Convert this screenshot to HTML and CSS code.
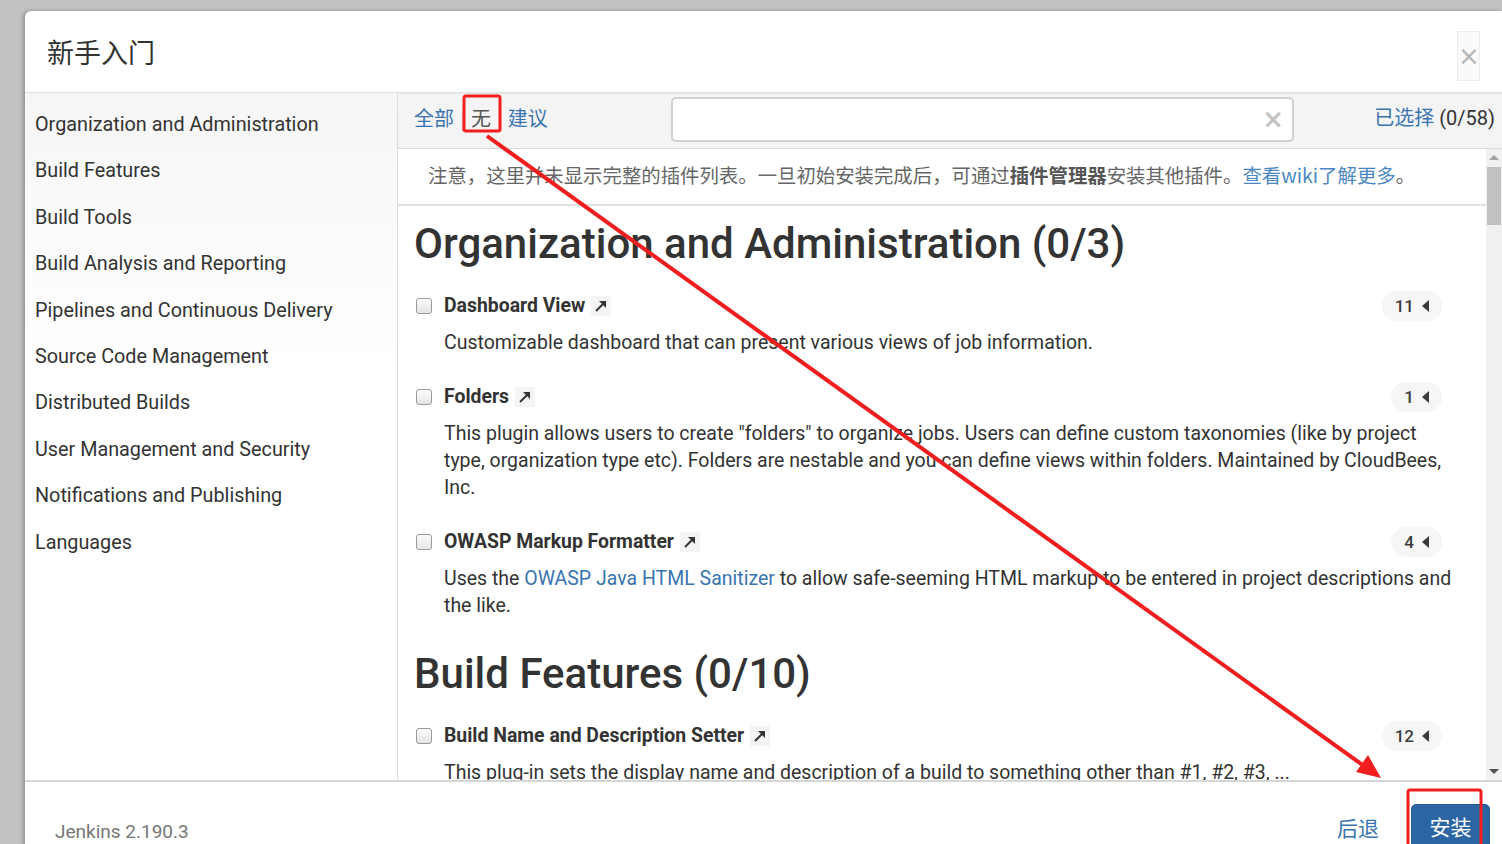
FILE: index.html
```html
<!DOCTYPE html>
<html lang="zh">
<head>
<meta charset="utf-8">
<title>新手入门</title>
<link rel="stylesheet" href="styles.css">
</head>
<body>
<div class="modal">
  <div class="modal-header">
    <h1 class="modal-title">新手入门</h1>
    <button class="close" type="button">×</button>
  </div>
  <div class="modal-body">
    <ul class="categories">
      <li>Organization and Administration</li>
      <li>Build Features</li>
      <li>Build Tools</li>
      <li>Build Analysis and Reporting</li>
      <li>Pipelines and Continuous Delivery</li>
      <li>Source Code Management</li>
      <li>Distributed Builds</li>
      <li>User Management and Security</li>
      <li>Notifications and Publishing</li>
      <li>Languages</li>
    </ul>
    <div class="plugins">
      <div class="toolbar">
        <div class="filters">
          <a href="#">全部</a><span class="sep">|</span><a href="#" class="active">无</a><span class="sep">|</span><a href="#">建议</a>
        </div>
        <div class="search">
          <input type="text" class="search-input">
          <span class="clear">×</span>
        </div>
        <div class="selected"><a href="#">已选择</a> (0/58)</div>
      </div>
      <div class="scroll-area">
        <div class="scroll-content">
          <p class="notice">注意，这里并未显示完整的插件列表。一旦初始安装完成后，可通过<b>插件管理器</b>安装其他插件。<a href="#">查看wiki了解更多</a>。</p>
          <div class="list">
            <h2 class="category">Organization and Administration (0/3)</h2>
            <div class="plugin">
              <div class="plugin-head">
                <span class="check"></span>
                <span class="name">Dashboard View</span>
                <span class="ext"><svg viewBox="0 0 14 14" width="14" height="14"><path d="M2 12 L11 3" stroke="#333" stroke-width="2"/><path d="M5 2 H12 V9 Z" fill="#333"/></svg></span>
                <span class="badge">11<i class="caret"></i></span>
              </div>
              <p class="desc">Customizable dashboard that can present various views of job information.</p>
            </div>
            <div class="plugin">
              <div class="plugin-head">
                <span class="check"></span>
                <span class="name">Folders</span>
                <span class="ext"><svg viewBox="0 0 14 14" width="14" height="14"><path d="M2 12 L11 3" stroke="#333" stroke-width="2"/><path d="M5 2 H12 V9 Z" fill="#333"/></svg></span>
                <span class="badge">1<i class="caret"></i></span>
              </div>
              <p class="desc">This plugin allows users to create "folders" to organize jobs. Users can define custom taxonomies (like by project type, organization type etc). Folders are nestable and you can define views within folders. Maintained by CloudBees, Inc.</p>
            </div>
            <div class="plugin">
              <div class="plugin-head">
                <span class="check"></span>
                <span class="name">OWASP Markup Formatter</span>
                <span class="ext"><svg viewBox="0 0 14 14" width="14" height="14"><path d="M2 12 L11 3" stroke="#333" stroke-width="2"/><path d="M5 2 H12 V9 Z" fill="#333"/></svg></span>
                <span class="badge">4<i class="caret"></i></span>
              </div>
              <p class="desc">Uses the <a href="#">OWASP Java HTML Sanitizer</a> to allow safe-seeming HTML markup to be entered in project descriptions and the like.</p>
            </div>
            <h2 class="category">Build Features (0/10)</h2>
            <div class="plugin">
              <div class="plugin-head">
                <span class="check"></span>
                <span class="name">Build Name and Description Setter</span>
                <span class="ext"><svg viewBox="0 0 14 14" width="14" height="14"><path d="M2 12 L11 3" stroke="#333" stroke-width="2"/><path d="M5 2 H12 V9 Z" fill="#333"/></svg></span>
                <span class="badge">12<i class="caret"></i></span>
              </div>
              <p class="desc">This plug-in sets the display name and description of a build to something other than #1, #2, #3, ...</p>
            </div>
          </div>
        </div>
        <div class="scrollbar">
          <span class="arrow up"></span>
          <div class="track"><div class="thumb"></div></div>
          <span class="arrow down"></span>
        </div>
      </div>
    </div>
  </div>
  <div class="modal-footer">
    <span class="version">Jenkins 2.190.3</span>
    <div class="actions">
      <a href="#" class="back">后退</a>
      <button type="button" class="install">安装</button>
    </div>
  </div>
</div>
<svg class="annotation" width="1502" height="844" viewBox="0 0 1502 844">
  <rect x="464" y="96" width="36" height="35" rx="2" fill="none" stroke="#f01e1e" stroke-width="3"/>
  <line x1="487" y1="136" x2="1364" y2="766" stroke="#f01e1e" stroke-width="4"/>
  <polygon points="1381,778 1356,772 1368,755" fill="#f01e1e"/>
  <rect x="1408" y="790" width="73" height="60" rx="2" fill="none" stroke="#f01e1e" stroke-width="3"/>
</svg>
</body>
</html>
```

FILE: styles.css
```css
* { box-sizing: border-box; }

html, body {
  margin: 0;
  height: 844px;
  overflow: hidden;
}

body {
  background: #c2c2c2;
  padding: 11px 0 0 25px;
  font-family: Roboto, "Noto Sans CJK SC", sans-serif;
  color: #333;
  position: relative;
}

a { color: #3a74b0; text-decoration: none; }

.modal {
  width: 1477px;
  height: 900px;
  background: #fff;
  border-radius: 6px 0 0 0;
  box-shadow: -2px 0 4px rgba(0, 0, 0, 0.25);
  display: flex;
  flex-direction: column;
}

.modal-header {
  height: 82px;
  border-bottom: 1px solid #e2e2e2;
  display: flex;
  align-items: center;
  justify-content: space-between;
  padding: 0 22px 0 22px;
}

.modal-title {
  margin: 0;
  font-size: 27px;
  font-weight: 400;
  color: #333;
  font-family: "Noto Sans CJK SC", sans-serif;
}

.close {
  width: 23px;
  height: 50px;
  margin-top: 9px;
  border: 1px solid #ececec;
  background: #fafafa;
  color: #b5b5b5;
  font-size: 26px;
  line-height: 1;
  padding: 0;
  font-family: "DejaVu Sans", sans-serif;
}

.modal-body {
  height: 689px;
  display: flex;
  border-bottom: 2px solid #d6d6d6;
}

.categories {
  list-style: none;
  margin: 0;
  padding: 9px 0 0 10px;
  width: 373px;
  flex: none;
  background: linear-gradient(#f6f6f6, #ffffff 40%);
  border-right: 1px solid #dcdcdc;
}

.categories li {
  font-size: 19.8px;
  line-height: 26.4px;
  padding: 10px 0;
  color: #333;
}

.plugins {
  flex: 1;
  display: flex;
  flex-direction: column;
  min-width: 0;
}

.toolbar {
  height: 56px;
  flex: none;
  background: #f4f4f4;
  border-top: 1px solid #e6e6e6;
  border-bottom: 1px solid #d8d8d8;
  display: flex;
  align-items: center;
}

.filters {
  width: 273px;
  flex: none;
  padding-left: 16px;
  font-family: "Noto Sans CJK SC", sans-serif;
  font-size: 20px;
  line-height: 24px;
  display: flex;
  align-items: center;
  margin-top: -6px;
}

.filters a { color: #3a74b0; }
.filters a.active { color: #555; }
.sep { color: #c8c8c8; margin: 0 6px; font-size: 18px; }

.search {
  width: 623px;
  flex: none;
  height: 45px;
  position: relative;
  margin-top: -4px;
}

.search-input {
  width: 100%;
  height: 100%;
  border: 2px solid #d0d0d0;
  border-radius: 5px;
  background: #fff;
  outline: none;
}

.clear {
  position: absolute;
  right: 10px;
  top: 8px;
  font-size: 26px;
  line-height: 28px;
  color: #c4c4c4;
  font-family: "DejaVu Sans", sans-serif;
  font-weight: bold;
}

.selected {
  margin-left: auto;
  padding-right: 7px;
  font-size: 20px;
  line-height: 24px;
  color: #333;
  font-family: Roboto, "Noto Sans CJK SC", sans-serif;
  margin-top: -6px;
}

.scroll-area {
  flex: 1;
  display: flex;
  min-height: 0;
}

.scroll-content {
  flex: 1;
  overflow: hidden;
  min-width: 0;
}

.notice {
  margin: 0;
  height: 57px;
  padding: 0 30px;
  line-height: 52px;
  border-bottom: 2px solid #e0e0e0;
  font-family: "Noto Sans CJK SC", sans-serif;
  font-size: 19.4px;
  color: #666;
  white-space: nowrap;
}

.notice b { color: #555; font-weight: 700; }
.notice a { color: #4a87c2; }

.list {
  padding: 9px 30px 0 16px;
}

.category {
  margin: 4px 0 23px;
  font-size: 42px;
  line-height: 50px;
  font-weight: 500;
  color: #333;
}

.plugin + .category {
  margin-top: 30px;
}

.plugin {
  margin-bottom: 27px;
  padding-left: 2px;
}

.plugin-head {
  display: flex;
  align-items: center;
  height: 27px;
  margin-bottom: 10px;
}

.check {
  width: 16px;
  height: 16px;
  border: 1px solid #9a9a9a;
  border-radius: 3px;
  background: linear-gradient(#fdfdfd, #e4e4e4);
  margin-right: 12px;
  flex: none;
}

.name {
  font-size: 19.4px;
  font-weight: 700;
  color: #333;
}

.ext {
  width: 20px;
  height: 20px;
  margin-left: 6px;
  background: #f4f4f4;
  display: flex;
  align-items: center;
  justify-content: center;
}

.badge {
  margin-left: auto;
  margin-right: 14px;
  height: 30px;
  padding: 0 13px;
  border-radius: 15px;
  background: #f6f6f6;
  font-size: 17px;
  font-weight: 500;
  color: #3c3c3c;
  display: flex;
  align-items: center;
  gap: 8px;
}

.caret {
  width: 0;
  height: 0;
  border-top: 6px solid transparent;
  border-bottom: 6px solid transparent;
  border-right: 7px solid #3c3c3c;
}

.desc {
  margin: 0;
  padding-left: 28px;
  font-size: 19.5px;
  line-height: 27px;
  color: #333;
}

.desc a { color: #3a74b0; }

.scrollbar {
  width: 16px;
  flex: none;
  background: #f1f1f1;
  display: flex;
  flex-direction: column;
  align-items: center;
}

.arrow {
  width: 0;
  height: 0;
  border-left: 5px solid transparent;
  border-right: 5px solid transparent;
  margin: 6px 0;
}

.arrow.up { border-bottom: 5px solid #a3a3a3; }
.arrow.down { border-top: 5px solid #505050; }

.track {
  flex: 1;
  width: 100%;
}

.thumb {
  margin: 1px 1px 0;
  height: 58px;
  background: #c1c1c1;
}

.modal-footer {
  flex: 1;
  display: flex;
  align-items: flex-start;
  justify-content: space-between;
  padding: 22px 12px 0 30px;
}

.version {
  font-size: 19px;
  color: #777;
  margin-top: 16px;
}

.actions {
  display: flex;
  align-items: flex-start;
}

.back {
  font-family: "Noto Sans CJK SC", sans-serif;
  font-size: 21px;
  line-height: 30px;
  color: #3a74b0;
  margin-top: 8px;
  margin-right: 32px;
}

.install {
  width: 79px;
  height: 56px;
  border: 1px solid #245a92;
  border-radius: 5px;
  background: #2b66a3;
  color: #fff;
  font-family: "Noto Sans CJK SC", sans-serif;
  font-size: 21px;
  padding: 6px 0 0;
  line-height: 30px;
  display: flex;
  justify-content: center;
  align-items: flex-start;
}

.annotation {
  position: absolute;
  top: 0;
  left: 0;
  pointer-events: none;
}
```
